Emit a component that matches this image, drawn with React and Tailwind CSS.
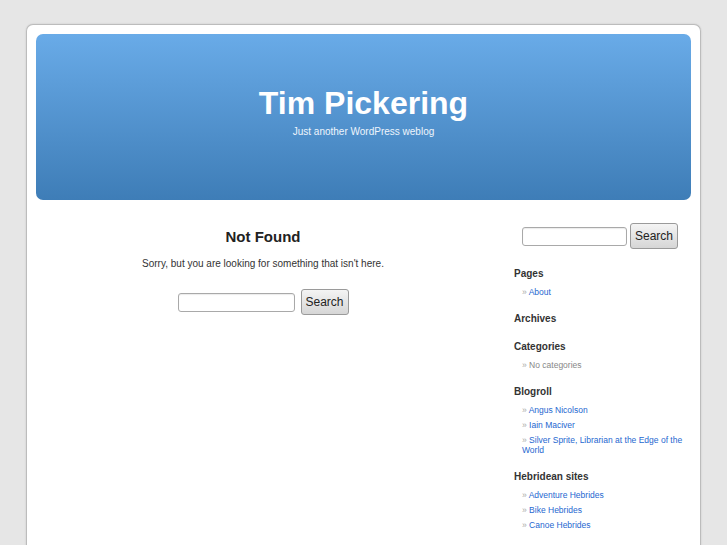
const sections = [
  { title: 'Pages', items: [{ label: 'About' }] },
  { title: 'Archives', items: [] },
  { title: 'Categories', items: [{ label: 'No categories', plain: true }] },
  {
    title: 'Blogroll',
    items: [
      { label: 'Angus Nicolson' },
      { label: 'Iain Maciver' },
      { label: 'Silver Sprite, Librarian at the Edge of the World' },
    ],
  },
  {
    title: 'Hebridean sites',
    items: [
      { label: 'Adventure Hebrides' },
      { label: 'Bike Hebrides' },
      { label: 'Canoe Hebrides' },
    ],
  },
]

const SearchForm = ({ inputWidth, gap }) => (
  <form className={`flex items-center ${gap}`} onSubmit={(e) => e.preventDefault()}>
    <input
      type="text"
      className={`${inputWidth} h-[19px] rounded-[3px] border border-[#a9a9a9] bg-white shadow-[inset_0_1px_1px_rgba(0,0,0,0.08)] outline-none`}
    />
    <button
      type="submit"
      className="h-[26px] w-[48px] rounded-[3px] border border-[#9a9a9a] bg-gradient-to-b from-[#f4f4f4] to-[#d6d6d6] text-[12px] leading-none text-[#222]"
    >
      Search
    </button>
  </form>
)

const Sidebar = () => (
  <aside className="ml-[16px] w-[185px] pt-[23px]">
    <div className="pl-[16px]">
      <SearchForm inputWidth="w-[105px]" gap="gap-[3px]" />
    </div>
    <div className="mt-[19px] pl-[8px]">
      {sections.map((section) => (
        <div key={section.title} className="mb-[16px]">
          <h2 className="text-[10px] font-bold leading-[12px] text-[#333]">{section.title}</h2>
          {section.items.length > 0 && (
            <ul className="mt-[7px] flex flex-col gap-[5px] pl-[8px]">
              {section.items.map((item) => (
                <li key={item.label} className="text-[8.5px] leading-[10px]">
                  <span className="text-[#aaa]">» </span>
                  {item.plain ? (
                    <span className="text-[#888]">{item.label}</span>
                  ) : (
                    <a href="#" className="text-[#2567d0]">{item.label}</a>
                  )}
                </li>
              ))}
            </ul>
          )}
        </div>
      ))}
    </div>
  </aside>
)

export default function App() {
  return (
    <div className="min-h-[545px] bg-[#e6e6e6] pt-[24px] font-['Liberation_Sans',Arial,sans-serif]">
      <div className="mx-auto min-h-[521px] w-[675px] rounded-t-[7px] border border-b-0 border-[#bcbcbc] bg-white p-[9px] shadow-[0_0_2px_rgba(0,0,0,0.15)]">
        <header className="flex h-[166px] flex-col items-center rounded-[7px] bg-gradient-to-b from-[#69abe8] to-[#3e7db7] pt-[51px] text-white">
          <h1 className="text-[32px] font-bold leading-[36px]">Tim Pickering</h1>
          <p className="mt-[5px] text-[10px] leading-[12px] text-[#eef5fc]">Just another WordPress weblog</p>
        </header>
        <div className="flex">
          <main className="flex w-[454px] flex-col items-center pt-[28px] text-[#222]">
            <h2 className="text-[15px] font-bold leading-[18px]">Not Found</h2>
            <p className="mt-[12px] text-[10px] leading-[12px] text-[#333]">
              Sorry, but you are looking for something that isn't here.
            </p>
            <div className="mt-[19px]">
              <SearchForm inputWidth="w-[117px]" gap="gap-[6px]" />
            </div>
          </main>
          <Sidebar />
        </div>
      </div>
    </div>
  )
}
